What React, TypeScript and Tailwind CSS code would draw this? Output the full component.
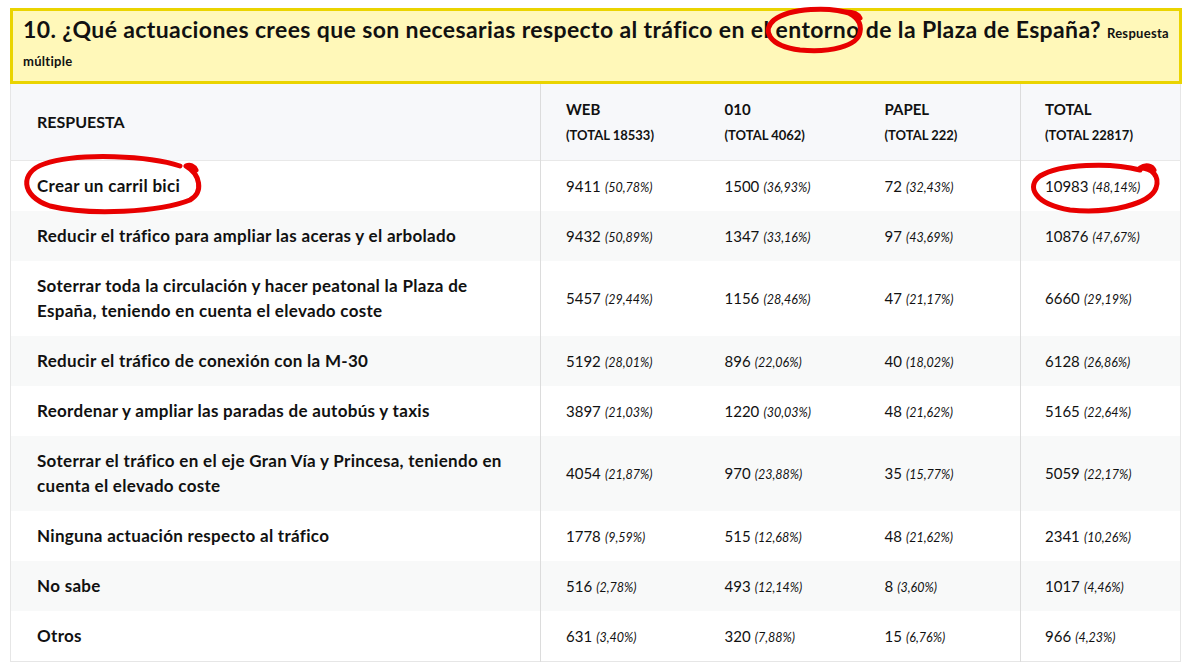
const rows = [
  { label: 'Crear un carril bici', web: ['9411', '50,78%'], tel: ['1500', '36,93%'], papel: ['72', '32,43%'], total: ['10983', '48,14%'] },
  { label: 'Reducir el tráfico para ampliar las aceras y el arbolado', web: ['9432', '50,89%'], tel: ['1347', '33,16%'], papel: ['97', '43,69%'], total: ['10876', '47,67%'] },
  { label: 'Soterrar toda la circulación y hacer peatonal la Plaza de España, teniendo en cuenta el elevado coste', web: ['5457', '29,44%'], tel: ['1156', '28,46%'], papel: ['47', '21,17%'], total: ['6660', '29,19%'] },
  { label: 'Reducir el tráfico de conexión con la M-30', web: ['5192', '28,01%'], tel: ['896', '22,06%'], papel: ['40', '18,02%'], total: ['6128', '26,86%'] },
  { label: 'Reordenar y ampliar las paradas de autobús y taxis', web: ['3897', '21,03%'], tel: ['1220', '30,03%'], papel: ['48', '21,62%'], total: ['5165', '22,64%'] },
  { label: 'Soterrar el tráfico en el eje Gran Vía y Princesa, teniendo en cuenta el elevado coste', web: ['4054', '21,87%'], tel: ['970', '23,88%'], papel: ['35', '15,77%'], total: ['5059', '22,17%'] },
  { label: 'Ninguna actuación respecto al tráfico', web: ['1778', '9,59%'], tel: ['515', '12,68%'], papel: ['48', '21,62%'], total: ['2341', '10,26%'] },
  { label: 'No sabe', web: ['516', '2,78%'], tel: ['493', '12,14%'], papel: ['8', '3,60%'], total: ['1017', '4,46%'] },
  { label: 'Otros', web: ['631', '3,40%'], tel: ['320', '7,88%'], papel: ['15', '6,76%'], total: ['966', '4,23%'] },
];

const Val = ({ v }: { v: string[] }) => (
  <span>
    <span className="text-[15px]">{v[0]}</span> <span className="text-[12.5px] italic">({v[1]})</span>
  </span>
);

const Head = ({ title, sub }: { title: string; sub: string }) => (
  <div className="flex flex-col gap-[6px]">
    <span className="text-[15px] font-bold leading-[20px]">{title}</span>
    <span className="text-[13px] font-bold leading-[20px]">{sub}</span>
  </div>
);

export default function App() {
  return (
    <div className="relative w-[1188px] h-[664px] bg-white text-[#111] pt-[8px] pl-[10px]" style={{ fontFamily: 'Lato, "Liberation Sans", sans-serif' }}>
      <div className="w-[1172px] h-[76px] border-[3px] border-[#ead400] bg-[#fff8b9] pl-[10px] pr-[4px] pt-[4px]">
        <h1 className="text-[23px] font-bold leading-[28px] tracking-[0.38px]">
          10. ¿Qué actuaciones crees que son necesarias respecto al tráfico en el entorno de la Plaza de España?{' '}
          <span className="text-[13px] leading-[16px] tracking-[0.3px]">Respuesta múltiple</span>
        </h1>
      </div>

      <table className="w-[1170px] table-fixed border-collapse border border-[#e6e6e6] border-t-0">
        <colgroup>
          <col className="w-[530px]" />
          <col className="w-[160px]" />
          <col className="w-[160px]" />
          <col className="w-[160px]" />
          <col className="w-[160px]" />
        </colgroup>
        <thead>
          <tr className="bg-[#f7f8fa] h-[76px] border-b border-[#e8e8e8]">
            <th className="text-left pl-[26px] text-[16px] font-bold">RESPUESTA</th>
            <th className="text-left pl-[25px] border-l border-[#dcdcdc]"><Head title="WEB" sub="(TOTAL 18533)" /></th>
            <th className="text-left pl-[24px]"><Head title="010" sub="(TOTAL 4062)" /></th>
            <th className="text-left pl-[24px]"><Head title="PAPEL" sub="(TOTAL 222)" /></th>
            <th className="text-left pl-[24px] border-l border-[#dcdcdc]"><Head title="TOTAL" sub="(TOTAL 22817)" /></th>
          </tr>
        </thead>
        <tbody>
          {rows.map((r, i) => (
            <tr key={r.label} className={i % 2 === 1 ? 'bg-[#f8f9f9]' : 'bg-white'}>
              <td className="pl-[26px] pr-[34px] py-[12.5px] text-[17px] font-bold leading-[25px] tracking-[0.3px]">{r.label}</td>
              <td className="pl-[25px] border-l border-[#dcdcdc]"><Val v={r.web} /></td>
              <td className="pl-[24px]"><Val v={r.tel} /></td>
              <td className="pl-[24px]"><Val v={r.papel} /></td>
              <td className="pl-[24px] border-l border-[#dcdcdc]"><Val v={r.total} /></td>
            </tr>
          ))}
        </tbody>
      </table>

      <svg className="absolute left-0 top-0 pointer-events-none" width="1188" height="664" viewBox="0 0 1188 664" fill="none" stroke="#e80000" strokeWidth="5" strokeLinecap="round" strokeLinejoin="round">
        <path d="M852 14 C 830 6, 790 8, 774 20 C 762 30, 768 46, 800 50 C 830 53, 858 46, 860 32 C 862 22, 856 16, 846 12 C 852 12, 858 14, 860 18" />
        <path d="M180 166 C 150 156, 80 152, 44 164 C 20 172, 20 196, 50 206 C 90 216, 160 212, 190 200 C 204 192, 200 174, 186 166 C 190 164, 194 166, 196 170" />
        <path d="M1140 170 C 1110 162, 1060 164, 1040 176 C 1026 186, 1034 204, 1070 210 C 1110 214, 1150 204, 1156 188 C 1160 176, 1152 168, 1140 168 C 1146 164, 1152 166, 1154 170" />
      </svg>
    </div>
  );
}
